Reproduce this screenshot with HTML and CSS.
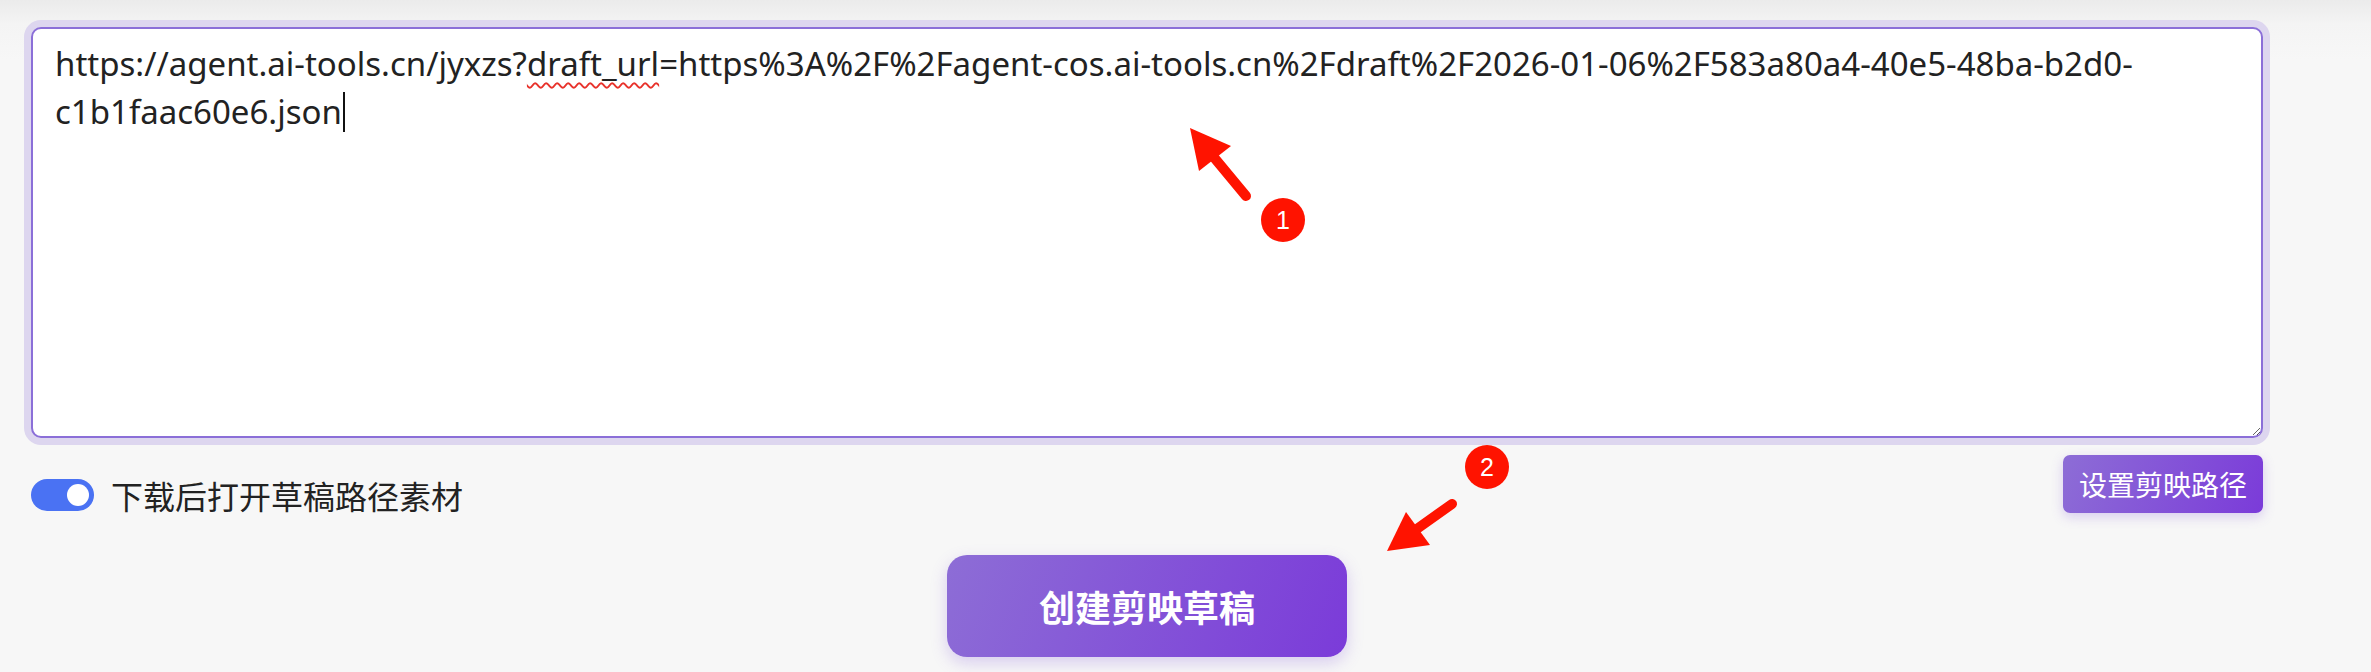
FILE: index.html
```html
<!DOCTYPE html>
<html lang="zh-CN">
<head>
    <meta charset="UTF-8">
    <title>创建剪映草稿</title>
    <link rel="stylesheet" href="styles.css">
</head>
<body>

<div class="panel">
    <!-- 草稿链接输入框 -->
    <div class="draft-input" role="textbox" aria-multiline="true">https://agent.ai-tools.cn/jyxzs?<span class="typo">draft_url</span>=https%3A%2F%2Fagent-cos.ai-tools.cn%2Fdraft%2F2026-01-06%2F583a80a4-40e5-48ba-b2d0-c1b1faac60e6.json<span class="caret"></span></div>

    <div class="options">
        <label class="switch-row">
            <span class="switch"><span class="knob"></span></span>
            <span class="switch-text">下载后打开草稿路径素材</span>
        </label>
        <button class="btn-path">设置剪映路径</button>
    </div>

    <div class="submit-row">
        <button class="btn-create">创建剪映草稿</button>
    </div>
</div>

<!-- 标注：箭头和序号 -->
<svg class="marks" width="2371" height="672" viewBox="0 0 2371 672">
    <g fill="#ff1300" stroke="#ff1300">
        <line x1="1246" y1="196" x2="1212" y2="155" stroke-width="10" stroke-linecap="round"/>
        <polygon points="1190,128 1231,146 1199,171" stroke="none"/>
        <circle cx="1283" cy="220" r="22" stroke="none"/>

        <line x1="1452" y1="504" x2="1414" y2="531" stroke-width="10" stroke-linecap="round"/>
        <polygon points="1387,551 1406,512 1430,545" stroke="none"/>
        <circle cx="1487" cy="467" r="22" stroke="none"/>
    </g>
    <g fill="#fff" font-family="Liberation Sans, sans-serif" font-size="25" text-anchor="middle">
        <text x="1283" y="229">1</text>
        <text x="1487" y="476">2</text>
    </g>
</svg>

</body>
</html>
```

FILE: styles.css
```css
*{
    margin: 0;
    padding: 0;
    box-sizing: border-box;
}

body{
    position: relative;
    height: 672px;
    overflow: hidden;
    background: linear-gradient(to bottom, #ebebeb 0, #f4f4f4 24px, #f7f7f7 60px);
    font-family: "Noto Sans", "Noto Sans CJK SC", sans-serif;
    color: #222;
}

.panel{
    padding: 27px 108px 0 31px;
}

.draft-input{
    height: 411px;
    padding: 11px 22px;
    background: #fff;
    border: 2px solid #8b6fd8;
    border-radius: 10px;
    box-shadow: 0 0 0 7px #ddd6ef;
    font-size: 33px;
    line-height: 48px;
    color: #222;
    word-break: normal;
    overflow-wrap: break-word;
    resize: both;
    overflow: auto;
}

.typo{
    text-decoration: underline wavy #e8322b;
    text-decoration-thickness: 2px;
    text-underline-offset: 6px;
}

.caret{
    display: inline-block;
    width: 2px;
    height: 40px;
    margin-left: 1px;
    background: #111;
    vertical-align: -8px;
}

.options{
    display: flex;
    justify-content: space-between;
    align-items: flex-start;
    margin-top: 17px;
}

.switch-row{
    display: flex;
    align-items: center;
    gap: 17px;
    margin-top: 24px;
}

.switch{
    display: flex;
    justify-content: flex-end;
    align-items: center;
    width: 63px;
    height: 32px;
    padding-right: 5px;
    border-radius: 16px;
    background-color: #4a72f3;
}

.knob{
    width: 22px;
    height: 22px;
    border-radius: 50%;
    background-color: #fff;
}

.switch-text{
    font-family: "Noto Sans CJK SC", sans-serif;
    font-size: 32px;
    line-height: 32px;
    color: #222;
}

.btn-path{
    padding: 12px 16px;
    border: none;
    border-radius: 7px;
    background: linear-gradient(110deg, #8d6dd6, #7b3bd9);
    box-shadow: 0 4px 12px rgba(123, 80, 217, 0.25);
    font-family: "Noto Sans CJK SC", sans-serif;
    font-size: 28px;
    line-height: 34px;
    color: #fff;
}

.submit-row{
    display: flex;
    justify-content: center;
    margin-top: 42px;
}

.btn-create{
    width: 400px;
    height: 102px;
    border: none;
    border-radius: 20px;
    background: linear-gradient(110deg, #8d6dd6, #7b3bd9);
    box-shadow: 0 6px 16px rgba(123, 80, 217, 0.25);
    font-family: "Noto Sans CJK SC", sans-serif;
    font-size: 36px;
    font-weight: 700;
    line-height: 36px;
    color: #fff;
}

.marks{
    position: absolute;
    top: 0;
    left: 0;
    pointer-events: none;
}
```
